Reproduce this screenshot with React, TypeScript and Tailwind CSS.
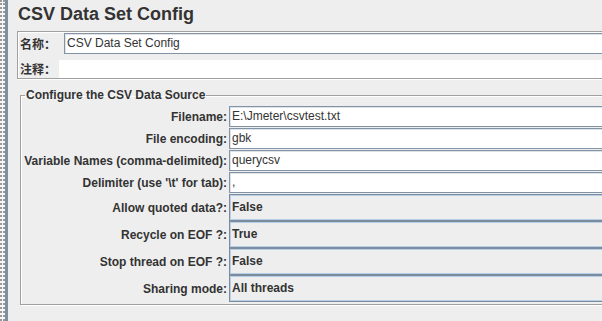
import React from "react";

const font = "font-['Liberation_Sans',Arial,'Noto_Sans_CJK_SC',sans-serif]";

const textRows = [
  { label: "Filename:", value: "E:\\Jmeter\\csvtest.txt" },
  { label: "File encoding:", value: "gbk" },
  { label: "Variable Names (comma-delimited):", value: "querycsv" },
  { label: "Delimiter (use '\\t' for tab):", value: "," },
];

const comboRows = [
  { label: "Allow quoted data?:", value: "False" },
  { label: "Recycle on EOF ?:", value: "True" },
  { label: "Stop thread on EOF ?:", value: "False" },
  { label: "Sharing mode:", value: "All threads" },
];

const App: React.FC = () => {
  return (
    <div className={`w-[602px] h-[321px] flex overflow-hidden bg-[#eeeeee] text-[#333333] ${font}`}>
      {/* splitter strip */}
      <div className="w-[5px] h-full bg-[#f6f6f6] border-x-2 border-dotted border-[#9a9a9a]" />
      <div className="w-[3px] h-full bg-[#7d8fa3]" />

      <div className="flex-1 min-w-0 flex flex-col pl-[9px] overflow-hidden">
        {/* Title */}
        <div className="h-[31px] pt-[3px] pl-[1px] text-[18px] leading-[22px] font-bold whitespace-nowrap">
          CSV Data Set Config
        </div>

        {/* Name / comment panel */}
        <div className="w-[620px] shrink-0 border border-[#a0a0a0] shadow-[inset_1px_1px_0_#ffffff,1px_1px_0_#ffffff] pt-[1px]">
          <div className="flex h-[21px] items-center">
            <div className="w-[46px] pl-[2px] text-[12px] font-bold font-['Noto_Sans_CJK_SC',sans-serif] leading-[14px]">
              名称：
            </div>
            <div className="flex-1 h-full bg-white border border-[#8393a6] shadow-[inset_1px_1px_0_#dfe3e8] pl-[2px] text-[12px] leading-[19px]">
              CSV Data Set Config
            </div>
          </div>
          <div className="flex h-[18px] mt-[6px] items-center">
            <div className="w-[41px] pl-[2px] text-[12px] font-bold font-['Noto_Sans_CJK_SC',sans-serif] leading-[14px]">
              注释：
            </div>
            <div className="flex-1 h-full bg-white" />
          </div>
        </div>

        {/* CSV data source */}
        <fieldset className="w-[620px] shrink-0 mt-[9px] ml-[3px] border border-[#a0a0a0] shadow-[inset_1px_1px_0_#ffffff,1px_1px_0_#ffffff] pt-[4px] pb-[2px]">
          <legend className="ml-[4px] px-[1px] text-[12px] leading-[14px] font-bold">
            Configure the CSV Data Source
          </legend>
          <div className="flex flex-col gap-[1px]">
            {textRows.map((r) => (
              <div key={r.label} className="flex h-[21px] items-center">
                <div className="w-[206px] text-right text-[12px] font-bold leading-[14px] whitespace-nowrap">
                  {r.label}
                </div>
                <div className="flex-1 ml-[2px] h-full bg-white border border-[#8393a6] shadow-[inset_1px_1px_0_#dfe3e8] pl-[2px] text-[12px] leading-[19px]">
                  {r.value}
                </div>
              </div>
            ))}
          </div>
          <div className="flex flex-col mt-[1px]">
            {comboRows.map((r) => (
              <div key={r.label} className="flex h-[27px] items-center">
                <div className="w-[206px] text-right text-[12px] font-bold leading-[14px] whitespace-nowrap">
                  {r.label}
                </div>
                <div className="flex-1 ml-[2px] h-full bg-[#eeeeee] border border-[#7b8c9f] shadow-[inset_1px_1px_0_#b8cfe5,inset_-1px_-1px_0_#b8cfe5] pl-[2px] text-[12px] font-bold leading-[25px]">
                  {r.value}
                </div>
              </div>
            ))}
          </div>
        </fieldset>
      </div>
    </div>
  );
};

export default App;
